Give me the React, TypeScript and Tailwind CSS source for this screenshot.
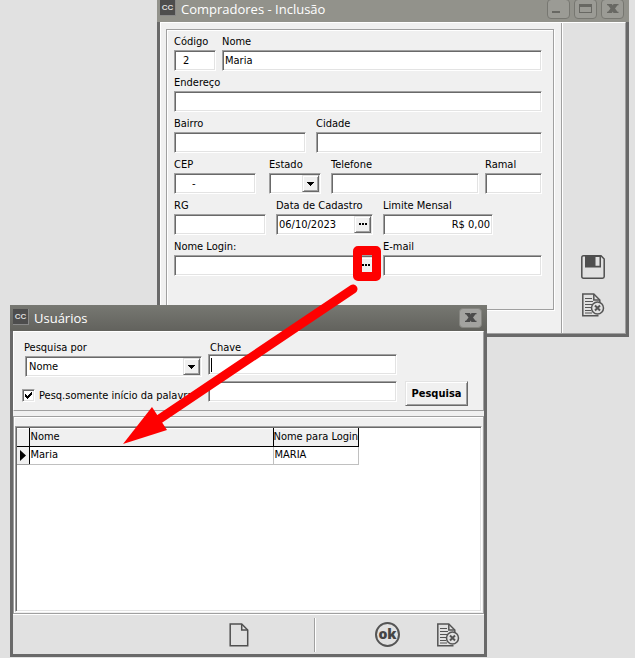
import React from "react";
import clsx from "clsx";

const bevel =
  "border border-t-[#a0a0a0] border-l-[#a0a0a0] border-r-white border-b-white shadow-[inset_1px_1px_0_#696969,inset_-1px_-1px_0_#e3e3e3]";
const raised =
  "border border-t-[#e3e3e3] border-l-[#e3e3e3] border-r-[#696969] border-b-[#696969] bg-[#f0f0f0] shadow-[inset_1px_1px_0_#fff,inset_-1px_-1px_0_#a0a0a0]";

type FieldProps = {
  id: string;
  label: string;
  value?: string;
  className?: string;
  inputClassName?: string;
  children?: React.ReactNode;
};

function Field({ id, label, value = "", className, inputClassName, children }: FieldProps) {
  return (
    <div className={clsx("min-w-0", className)}>
      <label htmlFor={id} className="block h-[15px] leading-3.5 whitespace-nowrap">
        {label}
      </label>
      <div className={clsx("relative flex h-[21px] bg-white p-px", bevel)}>
        <input
          id={id}
          type="text"
          defaultValue={value}
          className={clsx("min-w-0 flex-1 bg-transparent px-px outline-none", inputClassName)}
        />
        {children}
      </div>
    </div>
  );
}

function Dropdown({ id, options, className }: { id: string; options: string[]; className?: string }) {
  return (
    <div className={clsx("relative flex h-[21px] bg-white p-px", bevel, className)}>
      <select id={id} className="min-w-0 flex-1 appearance-none bg-transparent pl-0.5 outline-none">
        {options.map((o) => (
          <option key={o}>{o}</option>
        ))}
      </select>
      <span className={clsx("pointer-events-none flex w-[17px] items-center justify-center", raised)}>
        <svg width="7" height="4" viewBox="0 0 7 4" shapeRendering="crispEdges">
          <path d="M0 0h7v1H6v1H5v1H4v1H3V3H2V2H1V1H0z" />
        </svg>
      </span>
    </div>
  );
}

function DotsButton({ label }: { label: string }) {
  return (
    <button type="button" aria-label={label} className={clsx("flex w-[17px] items-center justify-center pb-0.5", raised)}>
      <svg width="8" height="2" viewBox="0 0 8 2" shapeRendering="crispEdges">
        <path d="M0 0h2v2H0zM3 0h2v2H3zM6 0h2v2H6z" />
      </svg>
    </button>
  );
}

const glyphs = {
  Minimizar: <path d="M5 11h8v2H5z" />,
  Maximizar: <path fillRule="evenodd" d="M5 4h13v9H5zM6 7v5h11V7z" />,
  Fechar: (
    <path d="M6 4h5l.7 1.500L12.500 4h5v1.300h-1L14 8.500l2.500 3.200h1V13h-5l-.8-1.500L11 13H6v-1.300h1L9.500 8.500 7 5.300H6z" />
  ),
};

type TitleButton = keyof typeof glyphs;

function TitleBar({ title, active, buttons }: { title: string; active?: boolean; buttons: TitleButton[] }) {
  return (
    <header
      className={clsx(
        "flex h-[26px] items-center gap-1 pr-[5px] pl-[3px]",
        active ? "bg-linear-to-b from-[#777872] to-[#62625d]" : "bg-[#92928b]",
      )}
    >
      <span className="mb-0.5 flex size-4 items-center justify-center border-r border-b border-[#888] bg-[#4d4d4d] font-['Liberation_Sans',sans-serif] text-[8px] leading-3 font-bold text-[#ddd]">
        CC
      </span>
      <h1 className="flex-1 pl-px font-['Open_Sans','Noto_Sans',sans-serif] text-[13px] leading-5 text-white">{title}</h1>
      {buttons.map((b) => (
        <button
          key={b}
          type="button"
          aria-label={b}
          className={clsx(
            "mb-px h-5 w-[23px] rounded-[4px] border",
            active ? "border-[#858580] bg-[#a3a3a0] text-[#4b4b4b]" : "border-[#777771] bg-[#9b9b95] text-[#686863]",
          )}
        >
          <svg width="21" height="18" viewBox="1 0 21 18" fill="currentColor">
            {glyphs[b]}
          </svg>
        </button>
      ))}
    </header>
  );
}

function SaveIcon() {
  return (
    <svg width="24" height="24" viewBox="0 0 24 24" fill="none" stroke="#4f4f4f" strokeWidth="1.500">
      <path d="M2.500.8H20L23.200 4v17.500q0 1.700-1.700 1.700h-19Q.8 23.200.8 21.500v-19Q.8.8 2.500.8z" />
      <path fill="#4f4f4f" stroke="none" fillRule="evenodd" d="M4 1h16v11.500H4zM14.500 2v8.700h4V2z" />
    </svg>
  );
}

function CancelIcon() {
  return (
    <svg width="24" height="24" viewBox="0 0 24 24" fill="none" stroke="#555" strokeWidth="1.500">
      <path d="M17.500 22.800H1.800V1h11l6 6v4" />
      <path d="M12.800 1v6h6" />
      <path strokeWidth="1" d="M4 5.500h7M4 8.500h8M4 11.500h8M4 14.500h6M4 17.500h6M4 20h7" />
      <circle cx="16.500" cy="15" r="6" fill="#e1e1e1" />
      <path strokeWidth="2" d="M14 12.500l5 5M19 12.500l-5 5" />
    </svg>
  );
}

function PageIcon() {
  return (
    <svg width="20" height="24" viewBox="0 0 20 24" fill="none" stroke="#505050" strokeWidth="1.500">
      <path d="M1.200 1h11.500l6 6v15.800H1.200z" />
      <path d="M12.700 1v6h6" />
    </svg>
  );
}

function PurchaserWindow() {
  return (
    <section className="absolute -top-1 right-[6px] left-[157px] flex h-[341px] flex-col bg-[#696969]">
      <TitleBar title="Compradores - Inclusão" buttons={["Minimizar", "Maximizar", "Fechar"]} />
      <div className="mx-[3px] mb-[3px] flex flex-1 border border-t-white border-l-white border-r-[#a0a0a0] border-b-[#a0a0a0] bg-[#f0f0f0]">
        <form className="flex-1 pt-1.5 pr-[7px] pl-[5px]">
          <fieldset className="flex h-[281px] flex-col gap-[5px] border border-[#a0a0a0] pt-[5px] pr-[11px] pl-[7px] shadow-[1px_1px_0_#fff,inset_1px_1px_0_#fff]">
            <div className="grid grid-cols-[42px_1fr] gap-1.5">
              <Field id="codigo" label="Código" value="2" inputClassName="pl-[7px]" />
              <Field id="nome" label="Nome" value="Maria" />
            </div>
            <Field id="endereco" label="Endereço" />
            <div className="grid grid-cols-[132px_1fr] gap-2.5">
              <Field id="bairro" label="Bairro" />
              <Field id="cidade" label="Cidade" />
            </div>
            <div className="flex">
              <Field id="cep" label="CEP" value="-" className="w-[82px]" inputClassName="pl-4" />
              <div className="ml-[13px] w-[52px]">
                <label htmlFor="estado" className="block h-[15px] leading-3.5">
                  Estado
                </label>
                <Dropdown id="estado" options={[""]} />
              </div>
              <Field id="telefone" label="Telefone" className="ml-2.5 flex-1" />
              <Field id="ramal" label="Ramal" className="ml-1.5 w-[57px]" />
            </div>
            <div className="flex gap-2.5">
              <Field id="rg" label="RG" className="w-[92px]" />
              <Field id="cadastro" label="Data de Cadastro" value="06/10/2023" className="w-[97px]">
                <DotsButton label="Escolher data" />
              </Field>
              <Field id="limite" label="Limite Mensal" value="R$ 0,00" className="w-[110px]" inputClassName="text-right" />
            </div>
            <div className="grid grid-cols-[202px_1fr] gap-[7px]">
              <Field id="login" label="Nome Login:">
                <DotsButton label="Escolher login" />
                <span className="pointer-events-none absolute -top-2.5 -right-1.5 h-[35px] w-7 rounded-[5px] border-[9px] border-[#fe0000]" />
              </Field>
              <Field id="email" label="E-mail" />
            </div>
          </fieldset>
        </form>
        <aside className="flex w-16 flex-col items-center justify-end gap-3.5 border-l border-[#a0a0a0] bg-[#e1e1e1] pr-0.5 pb-4 shadow-[inset_1px_0_0_#fff]">
          <button type="button" aria-label="Salvar">
            <SaveIcon />
          </button>
          <button type="button" aria-label="Cancelar">
            <CancelIcon />
          </button>
        </aside>
      </div>
    </section>
  );
}

function UsersTable() {
  return (
    <table className="border-collapse text-left">
      <thead>
        <tr className="h-[18px] bg-[#f0f0f0] shadow-[inset_0_1px_0_#fff]">
          <th className="w-3 border-r border-b border-black p-0" />
          <th className="w-[244px] border-r border-b border-black p-0 pl-px font-normal">Nome</th>
          <th className="border-r border-b border-black p-0 font-normal whitespace-nowrap">Nome para Login</th>
        </tr>
      </thead>
      <tbody>
        <tr className="h-[18px]">
          <td className="border-r border-b border-r-black border-b-[#a0a0a0] bg-[#f0f0f0] p-0">
            <svg className="mx-auto" width="6" height="11" viewBox="0 0 6 11">
              <path d="M0 0l6 5.500L0 11z" />
            </svg>
          </td>
          <td className="border-r border-b border-[#c0c0c0] p-0 pl-px">Maria</td>
          <td className="border-r border-b border-[#c0c0c0] p-0 pl-px">MARIA</td>
        </tr>
      </tbody>
    </table>
  );
}

function UsersWindow() {
  return (
    <section className="absolute top-[305px] left-2.5 flex h-[352px] w-[477px] flex-col bg-[#696969]">
      <TitleBar title="Usuários" active buttons={["Fechar"]} />
      <div className="mx-[3px] mb-[3px] flex flex-1 flex-col bg-[#f0f0f0]">
        <form className="flex h-20 border border-t-white border-l-white border-r-[#a0a0a0] border-b-[#a0a0a0] pt-2 pl-2">
          <div className="w-[180px]">
            <label htmlFor="campo" className="block h-4 pl-0.5 leading-4">
              Pesquisa por
            </label>
            <Dropdown id="campo" options={["Nome"]} className="ml-[3px]" />
            <label className="mt-3 flex h-[13px] items-center gap-1 whitespace-nowrap">
              <span className={clsx("relative flex size-[13px] shrink-0 items-center justify-center bg-white", bevel)}>
                <input type="checkbox" defaultChecked className="peer absolute inset-0 appearance-none" />
                <svg className="hidden peer-checked:block" width="7" height="7" viewBox="0 0 7 7" shapeRendering="crispEdges">
                  <path d="M0 2l2 2 5-4v3L2 7 0 5z" />
                </svg>
              </span>
              Pesq.somente início da palavra
            </label>
          </div>
          <div className="ml-1.5 w-[189px]">
            <label htmlFor="chave" className="block h-3.5 pl-0.5 leading-4">
              Chave
            </label>
            <div className={clsx("relative flex h-[21px] items-center bg-white p-px", bevel)}>
              <span className="ml-px h-3.5 w-px bg-black" />
              <input id="chave" type="text" className="min-w-0 flex-1 outline-none" />
            </div>
            <div className={clsx("mt-1.5 flex h-[21px] bg-white p-px", bevel)}>
              <input aria-label="Chave final" type="text" className="min-w-0 flex-1 outline-none" />
            </div>
          </div>
          <button type="button" className={clsx("mt-[41px] ml-2 h-[25px] w-[63px] font-bold", raised)}>
            Pesquisa
          </button>
        </form>
        <div className="mt-[5px] flex flex-1 flex-col border border-[#a0a0a0] px-px pt-[9px] pb-px shadow-[inset_1px_1px_0_#fff]">
          <div className={clsx("flex-1 bg-white p-px", bevel)}>
            <UsersTable />
          </div>
        </div>
        <footer className="flex h-10 items-center border-t border-white bg-[#e1e1e1]">
          <div className="flex h-[34px] w-[302px] items-center justify-end border-r border-[#a0a0a0] pr-[65px] shadow-[1px_0_0_#fff]">
            <button type="button" aria-label="Novo">
              <PageIcon />
            </button>
          </div>
          <div className="flex flex-1 items-center justify-end gap-9 pr-6">
            <button
              type="button"
              className="flex size-[25px] items-center justify-center rounded-full border-2 border-[#555] pb-0.5 font-['Open_Sans','Noto_Sans',sans-serif] text-[14px] leading-4 font-extrabold text-[#444]"
            >
              ok
            </button>
            <button type="button" aria-label="Cancelar">
              <CancelIcon />
            </button>
          </div>
        </footer>
      </div>
    </section>
  );
}

export default function App() {
  return (
    <main className="relative min-h-screen overflow-hidden bg-[#e1e1e1] font-['DejaVu_Sans_Condensed','DejaVu_Sans',sans-serif] text-[11px] leading-3.5 text-black">
      <PurchaserWindow />
      <UsersWindow />
      <svg className="pointer-events-none absolute top-0 left-0" width="400" height="460" viewBox="0 0 400 460">
        <path d="M353 289L158 420" stroke="#fe0000" strokeWidth="9" strokeLinecap="round" />
        <path d="M123 444l29-37 15 23z" fill="#fe0000" />
      </svg>
    </main>
  );
}
